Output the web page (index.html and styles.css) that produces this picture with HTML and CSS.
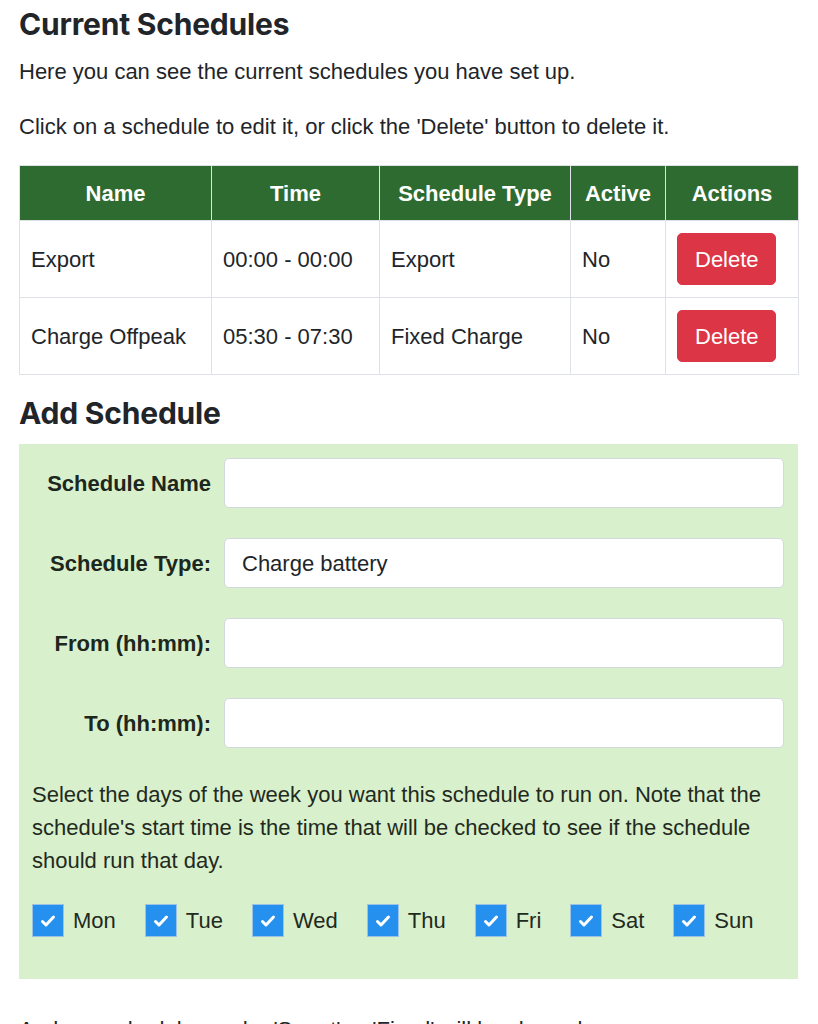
FILE: index.html
```html
<!DOCTYPE html>
<html lang="en">
<head>
<meta charset="utf-8">
<title>Schedules</title>
<link rel="stylesheet" href="styles.css">
</head>
<body>
<main class="page">
  <h2 class="title">Current Schedules</h2>
  <p class="text">Here you can see the current schedules you have set up.</p>
  <p class="text">Click on a schedule to edit it, or click the 'Delete' button to delete it.</p>

  <table class="sched">
    <colgroup>
      <col class="c-name"><col class="c-time"><col class="c-type"><col class="c-active"><col class="c-actions">
    </colgroup>
    <thead>
      <tr><th>Name</th><th>Time</th><th>Schedule Type</th><th>Active</th><th>Actions</th></tr>
    </thead>
    <tbody>
      <tr><td>Export</td><td>00:00 - 00:00</td><td>Export</td><td>No</td><td><button class="btn-del">Delete</button></td></tr>
      <tr><td>Charge Offpeak</td><td>05:30 - 07:30</td><td>Fixed Charge</td><td>No</td><td><button class="btn-del">Delete</button></td></tr>
    </tbody>
  </table>

  <h2 class="title">Add Schedule</h2>
  <form class="add-box">
    <div class="field">
      <label class="field-label">Schedule Name</label>
      <input class="field-input" type="text">
    </div>
    <div class="field">
      <label class="field-label">Schedule Type:</label>
      <select class="field-input field-select"><option>Charge battery</option></select>
    </div>
    <div class="field">
      <label class="field-label">From (hh:mm):</label>
      <input class="field-input" type="text">
    </div>
    <div class="field">
      <label class="field-label">To (hh:mm):</label>
      <input class="field-input" type="text">
    </div>
    <p class="days-note">Select the days of the week you want this schedule to run on. Note that the schedule's start time is the time that will be checked to see if the schedule should run that day.</p>
    <div class="days">
      <label class="day"><span class="cb"><svg width="16" height="14" viewBox="0 0 16 14"><path d="M2.5 7.5 L6 11 L13.5 3" fill="none" stroke="#fff" stroke-width="3" stroke-linecap="round" stroke-linejoin="round"/></svg></span>Mon</label>
      <label class="day"><span class="cb"><svg width="16" height="14" viewBox="0 0 16 14"><path d="M2.5 7.5 L6 11 L13.5 3" fill="none" stroke="#fff" stroke-width="3" stroke-linecap="round" stroke-linejoin="round"/></svg></span>Tue</label>
      <label class="day"><span class="cb"><svg width="16" height="14" viewBox="0 0 16 14"><path d="M2.5 7.5 L6 11 L13.5 3" fill="none" stroke="#fff" stroke-width="3" stroke-linecap="round" stroke-linejoin="round"/></svg></span>Wed</label>
      <label class="day"><span class="cb"><svg width="16" height="14" viewBox="0 0 16 14"><path d="M2.5 7.5 L6 11 L13.5 3" fill="none" stroke="#fff" stroke-width="3" stroke-linecap="round" stroke-linejoin="round"/></svg></span>Thu</label>
      <label class="day"><span class="cb"><svg width="16" height="14" viewBox="0 0 16 14"><path d="M2.5 7.5 L6 11 L13.5 3" fill="none" stroke="#fff" stroke-width="3" stroke-linecap="round" stroke-linejoin="round"/></svg></span>Fri</label>
      <label class="day"><span class="cb"><svg width="16" height="14" viewBox="0 0 16 14"><path d="M2.5 7.5 L6 11 L13.5 3" fill="none" stroke="#fff" stroke-width="3" stroke-linecap="round" stroke-linejoin="round"/></svg></span>Sat</label>
      <label class="day"><span class="cb"><svg width="16" height="14" viewBox="0 0 16 14"><path d="M2.5 7.5 L6 11 L13.5 3" fill="none" stroke="#fff" stroke-width="3" stroke-linecap="round" stroke-linejoin="round"/></svg></span>Sun</label>
    </div>
  </form>
  <p class="text after">And any schedules under 'Smart' or 'Fixed' will be shown here.</p>
</main>
</body>
</html>
```

FILE: styles.css
```css
* { box-sizing: border-box; }

html, body {
  margin: 0;
  background: #fff;
}

body {
  font-family: "Liberation Sans", Arial, sans-serif;
  color: #212529;
  font-size: 22px;
  line-height: 33px;
}

.page {
  padding: 6px 20px 0 19px;
}

.title {
  font-family: Inter, "Liberation Sans", sans-serif;
  font-weight: 700;
  font-size: 30px;
  line-height: 36px;
  margin: 0 0 13px;
  letter-spacing: -0.2px;
}

.text {
  margin: 0 0 22px;
}

.sched {
  width: 779px;
  border-collapse: collapse;
  table-layout: fixed;
  margin-bottom: 20px;
}

.c-name { width: 192px; }
.c-time { width: 168px; }
.c-type { width: 191px; }
.c-active { width: 95px; }
.c-actions { width: 133px; }

.sched th {
  background: #2e6b30;
  color: #fff;
  font-weight: 700;
  text-align: center;
  padding: 11px 6px 10px;
  border: 1px solid #dee2e6;
  white-space: nowrap;
}

.sched td {
  padding: 12px 11px;
  border: 1px solid #dee2e6;
  vertical-align: middle;
  white-space: nowrap;
}

.btn-del {
  font-family: "Liberation Sans", Arial, sans-serif;
  font-size: 22px;
  line-height: 33px;
  color: #fff;
  background: #dc3545;
  border: 1px solid #dc3545;
  border-radius: 5px;
  padding: 8.5px 17px;
  width: 99px;
}

.add-box {
  background: #d9f0cc;
  padding: 14px 14px 42px 13px;
}

.field {
  display: flex;
  align-items: center;
  gap: 13px;
  margin-bottom: 30px;
}

.field-label {
  width: 179px;
  flex: none;
  text-align: right;
  font-weight: 700;
  color: #1c271d;
}

.field-input {
  flex: 1;
  height: 50px;
  background: #fff;
  border: 1px solid #d3d8dc;
  border-radius: 5px;
  font-family: "Liberation Sans", Arial, sans-serif;
  font-size: 22px;
  color: #212529;
  padding: 0 17px;
  margin: 0;
}

.field-select {
  appearance: none;
  -webkit-appearance: none;
}

.days-note {
  margin: 0 0 27px;
  color: #1f2a20;
}

.days {
  display: flex;
  align-items: center;
  gap: 29px;
}

.day {
  display: flex;
  align-items: center;
  gap: 9px;
  color: #1f2a20;
}

.cb {
  width: 32px;
  height: 33px;
  background: #2590ee;
  border: 1px solid #9cc3e4;
  display: flex;
  align-items: center;
  justify-content: center;
}

.after {
  margin-top: 34px;
}
```
